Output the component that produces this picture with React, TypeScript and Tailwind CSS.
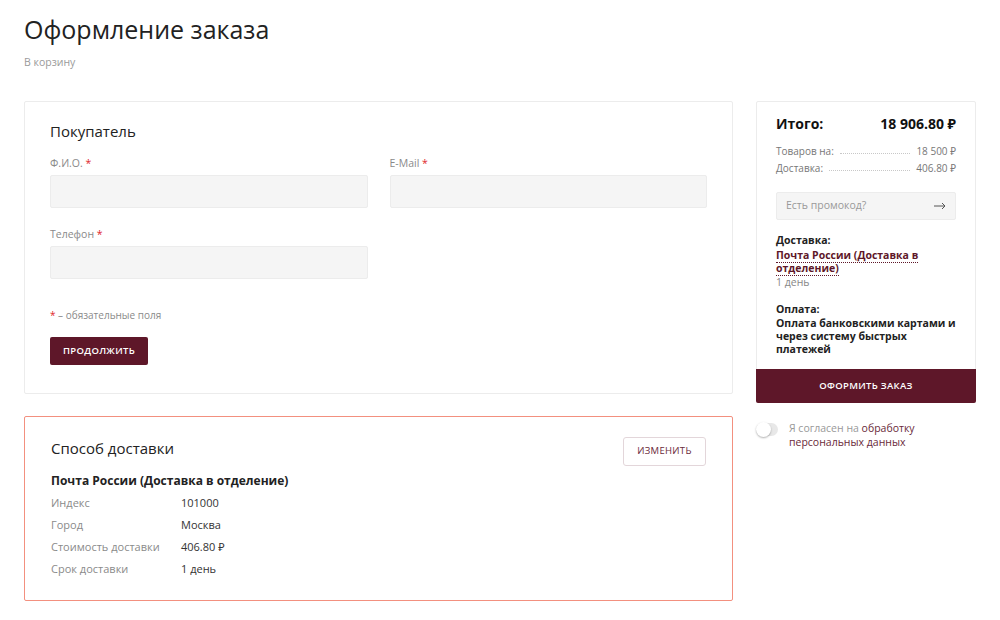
import React from 'react'

const Req = () => <span className="text-[#e0262b]">*</span>

const Field = ({ label }: { label: string }) => (
  <div className="flex flex-col">
    <label className="text-[10.5px] text-[#8a8a8a] h-[12px] leading-[12px] mb-[6px]">
      {label} <Req />
    </label>
    <div className="h-[33px] bg-[#f5f5f5] border border-[#ececec] rounded-[2px]" />
  </div>
)

const DotRow = ({ label, value }: { label: string; value: string }) => (
  <div className="flex items-end text-[10px] text-[#777] leading-[17px]">
    <span>{label}</span>
    <span className="flex-1 mx-[6px] mb-[6px] border-b border-dotted border-[#c8c8c8]" />
    <span>{value}</span>
  </div>
)

const InfoRow = ({ label, value }: { label: string; value: string }) => (
  <div className="flex text-[11px] leading-[22px]">
    <span className="w-[130px] text-[#8a8a8a]">{label}</span>
    <span className="text-[#333]">{value}</span>
  </div>
)

export default function App() {
  return (
    <div
      className="min-h-[620px] bg-white px-6 text-[#222]"
      style={{ fontFamily: '"Open Sans", "Noto Sans", sans-serif' }}
    >
      <h1 className="pt-[12px] text-[25px] leading-[34px] text-[#222]">Оформление заказа</h1>
      <div className="mt-[9px] text-[10.5px] text-[#9a9a9a]">В корзину</div>

      <div className="mt-[30px] flex gap-[23px] items-start">
        <div className="w-[709px] flex flex-col gap-[22px]">
          <div className="border border-[#ececec] rounded-[2px] px-[25px] pt-[18px] pb-[28px]">
            <h2 className="text-[15px] leading-[22px] text-[#222]">Покупатель</h2>
            <div className="mt-[15px] grid grid-cols-2 gap-x-[22px] gap-y-[20px]">
              <Field label="Ф.И.О." />
              <Field label="E-Mail" />
              <Field label="Телефон" />
            </div>
            <div className="mt-[29px] text-[10px] text-[#8a8a8a]">
              <Req /> – обязательные поля
            </div>
            <button className="mt-[14px] h-[28px] w-[98px] bg-[#5e1729] rounded-[2px] text-white text-[9.5px] font-semibold tracking-[0.3px]">
              ПРОДОЛЖИТЬ
            </button>
          </div>

          <div className="border border-[#f3907f] rounded-[2px] px-[26px] pt-[19px] pb-[20px]">
            <div className="flex items-start justify-between">
              <h2 className="mt-[1px] text-[15px] leading-[22px] text-[#222]">Способ доставки</h2>
              <button className="mt-[1px] h-[29px] w-[83px] border border-[#e3d6da] rounded-[3px] text-[9.5px] text-[#6a2a3a] tracking-[0.3px]">
                ИЗМЕНИТЬ
              </button>
            </div>
            <div className="mt-[5px] text-[12px] font-bold text-[#222] leading-[20px]">
              Почта России (Доставка в отделение)
            </div>
            <div className="mt-[1px]">
              <InfoRow label="Индекс" value="101000" />
              <InfoRow label="Город" value="Москва" />
              <InfoRow label="Стоимость доставки" value="406.80 ₽" />
              <InfoRow label="Срок доставки" value="1 день" />
            </div>
          </div>
        </div>

        <div className="w-[220px] flex flex-col">
          <div className="border border-[#ececec] rounded-[2px] flex flex-col">
            <div className="px-[19px] pt-[12px] pb-[13px]">
              <div className="flex justify-between text-[14px] font-bold text-[#111] leading-[20px]">
                <span>Итого:</span>
                <span>18 906.80 ₽</span>
              </div>
              <div className="mt-[9px]">
                <DotRow label="Товаров на:" value="18 500 ₽" />
                <DotRow label="Доставка:" value="406.80 ₽" />
              </div>
              <div className="mt-[15px] h-[28px] bg-[#f5f5f5] border border-[#ececec] rounded-[2px] flex items-center justify-between px-[9px]">
                <span className="text-[10.5px] text-[#999]">Есть промокод?</span>
                <svg width="12" height="8" viewBox="0 0 12 8" fill="none" stroke="#555" strokeWidth="1">
                  <path d="M0 4h11M8 1l3 3-3 3" />
                </svg>
              </div>
              <div className="mt-[14px] text-[10.5px] leading-[13px]">
                <div className="font-bold text-[#222]">Доставка:</div>
                <div className="mt-[2px] font-bold text-[#5e1729]">
                  <span className="border-b border-dotted border-[#5e1729]">Почта России (Доставка в</span>
                  <br />
                  <span className="border-b border-dotted border-[#5e1729]">отделение)</span>
                </div>
                <div className="text-[#888] mt-[1px]">1 день</div>
                <div className="mt-[14px] font-bold text-[#222]">Оплата:</div>
                <div className="mt-[1px] font-bold text-[#222]">
                  Оплата банковскими картами и через систему быстрых платежей
                </div>
              </div>
            </div>
            <button className="-mx-px -mb-px h-[34px] bg-[#5e1729] rounded-b-[2px] text-white text-[9.5px] font-semibold tracking-[0.3px]">
              ОФОРМИТЬ ЗАКАЗ
            </button>
          </div>

          <div className="mt-[18px] flex items-start gap-[11px]">
            <div className="mt-[2px] w-[22px] h-[13px] rounded-full bg-[#e8e8e8] relative shrink-0">
              <div className="absolute left-0 top-[-1px] w-[15px] h-[15px] rounded-full bg-white shadow-[0_1px_2px_rgba(0,0,0,0.3)]" />
            </div>
            <div className="flex flex-col text-[10.5px] leading-[14px]">
              <div>
                <span className="text-[#999]">Я согласен на </span>
                <span className="text-[#6a2a3a]">обработку</span>
              </div>
              <span className="text-[#6a2a3a]">персональных данных</span>
            </div>
          </div>
        </div>
      </div>
    </div>
  )
}
